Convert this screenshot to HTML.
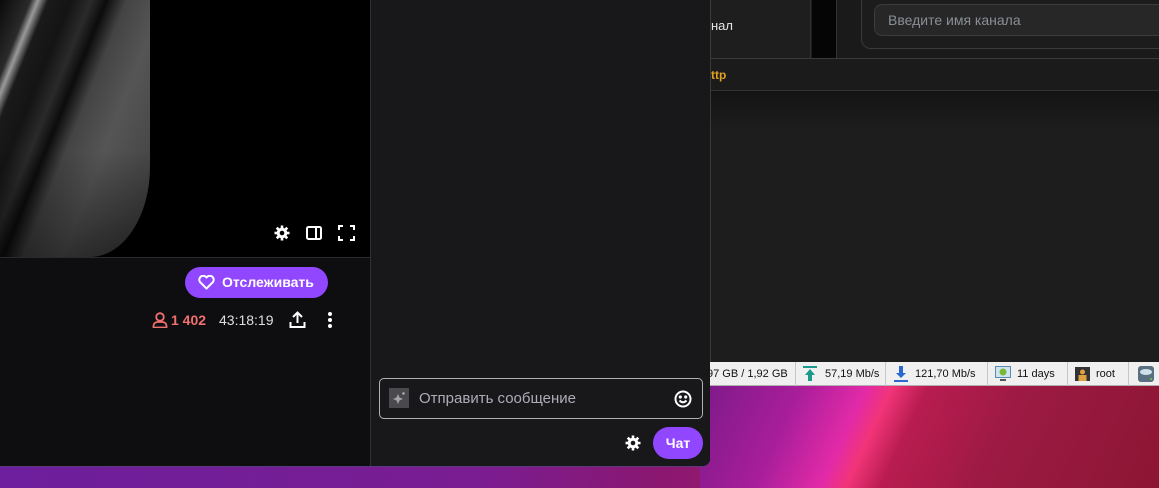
<!DOCTYPE html>
<html><head><meta charset="utf-8"><style>
*{margin:0;padding:0;box-sizing:border-box}
body{width:1159px;height:488px;overflow:hidden;position:relative;font-family:"Liberation Sans",Arial,sans-serif;
background:linear-gradient(100deg,#6a1f9e 0%,#7a1d92 45%,#8a1770 60%,#a01a6a 70%,#e02a90 76%,#f03070 79%,#9a1a45 82%,#8a1535 100%);}
.abs{position:absolute}
</style></head><body>
<div class="abs" style="left:700px;top:386px;width:459px;height:102px;background:linear-gradient(115deg,#7c1a8a 0%,#a81e9a 20%,#e22aa8 33%,#f23478 38%,#b81c50 45%,#9c1a44 65%,#8c1632 100%)"></div>
<div class="abs" style="left:710px;top:0;width:449px;height:362px;background:#1c1c1c"></div>
<div class="abs" style="left:700px;top:0;width:11px;height:362px;background:#151515"></div>
<div class="abs" style="left:710px;top:0;width:1px;height:362px;background:#3a3a3a"></div>
<div class="abs" style="left:711px;top:0;width:100px;height:58px;background:#1e1e1e;border-right:1px solid #333"></div>
<div class="abs" style="left:812px;top:0;width:24px;height:58px;background:#050505"></div>
<div class="abs" style="left:836px;top:0;width:1px;height:58px;background:#333"></div>
<div class="abs" style="left:837px;top:0;width:322px;height:58px;background:#1a1a1a"></div>
<div class="abs" style="left:861px;top:-10px;width:320px;height:59px;border:1px solid #3a3a3a;border-radius:10px;background:#1c1c1c"></div>
<div class="abs" style="left:874px;top:4px;width:300px;height:32px;border:1px solid #3c3c3c;border-radius:8px;background:#272727;color:#8a8f96;font-size:14px;line-height:30px;padding-left:13px">Введите имя канала</div>
<div class="abs" style="left:711px;top:18px;color:#e6e6e6;font-size:13px">нал</div>
<div class="abs" style="left:711px;top:58px;width:448px;height:1px;background:#3a3a3a"></div>
<div class="abs" style="left:711px;top:59px;width:448px;height:31px;background:#1b1b1b"></div>
<div class="abs" style="left:711px;top:68px;color:#e0a020;font-size:12px;font-weight:bold">ttp</div>
<div class="abs" style="left:711px;top:90px;width:448px;height:1px;background:#333"></div>
<div class="abs" style="left:711px;top:91px;width:448px;height:271px;background:linear-gradient(180deg,#141414,#1d1d1d 15%,#1d1d1d)"></div>
<div class="abs" style="left:710px;top:362px;width:449px;height:24px;background:#f0f0f0;border-bottom:1px solid #b0b0b0;font-size:11px;color:#111;line-height:24px">
 <span class="abs" style="left:-3px">97 GB / 1,92 GB</span>
 <div class="abs" style="left:85px;top:0;width:1px;height:24px;background:#c8c8c8"></div>
 <svg class="abs" style="left:93px;top:4px" width="14" height="16"><rect x="0" y="0" width="14" height="2" fill="#1a9a8a"/><path d="M7 3 L12 9 H9 V15 H5 V9 H2 Z" fill="#1a9a8a"/></svg>
 <span class="abs" style="left:115px">57,19 Mb/s</span>
 <div class="abs" style="left:175px;top:0;width:1px;height:24px;background:#c8c8c8"></div>
 <svg class="abs" style="left:184px;top:4px" width="14" height="16"><path d="M5 0 H9 V7 H12 L7 12 L2 7 H5 Z" fill="#2a6ad0"/><rect x="0" y="14" width="14" height="2" fill="#2a6ad0"/></svg>
 <span class="abs" style="left:205px">121,70 Mb/s</span>
 <div class="abs" style="left:277px;top:0;width:1px;height:24px;background:#c8c8c8"></div>
 <svg class="abs" style="left:285px;top:4px" width="16" height="16"><rect x="0" y="0" width="16" height="12" fill="#5a8ab0"/><rect x="1" y="1" width="14" height="10" fill="#cfe3f0"/><circle cx="8" cy="6" r="3.5" fill="#7ab83a"/><rect x="5" y="13" width="6" height="2" fill="#555"/></svg>
 <span class="abs" style="left:307px">11 days</span>
 <div class="abs" style="left:357px;top:0;width:1px;height:24px;background:#c8c8c8"></div>
 <svg class="abs" style="left:365px;top:5px" width="15" height="14"><rect width="15" height="14" fill="#333"/><circle cx="7.5" cy="5" r="2.5" fill="#e0a040"/><rect x="3.5" y="8" width="8" height="6" fill="#e0a040"/></svg>
 <span class="abs" style="left:386px">root</span>
 <div class="abs" style="left:418px;top:0;width:1px;height:24px;background:#c8c8c8"></div>
 <svg class="abs" style="left:428px;top:4px" width="16" height="16"><rect width="16" height="16" rx="3" fill="#5a7080"/><ellipse cx="8" cy="6" rx="6" ry="3" fill="#cfe0ea"/><circle cx="13" cy="13" r="1" fill="#7c4"/></svg>
</div>
<div class="abs" style="left:0;top:0;width:710px;height:467px;background:#0e0e10;border-bottom-right-radius:8px;overflow:hidden;border-bottom:1px solid #5a3a7a">
 <div class="abs" style="left:0;top:0;width:370px;height:257px;background:#000"></div>
 <div class="abs" style="left:0;top:0;width:150px;height:257px;border-bottom-right-radius:60px 90px;background:linear-gradient(112deg,#0a0a0a 0%,#2a2a2a 12%,#9a9a9a 15%,#1a1a1a 19%,#141414 28%,#2a2a2a 36%,#0c0c0c 42%,#444 50%,#555 65%,#4a4a4a 80%,#3a3a3a 100%)"></div>
 <div class="abs" style="left:0;top:150px;width:150px;height:107px;border-bottom-right-radius:60px 90px;background:linear-gradient(180deg,rgba(0,0,0,0),rgba(0,0,0,.45))"></div>
 <div class="abs" style="left:0;top:257px;width:370px;height:1px;background:#2a2a2e"></div>
 <svg class="abs" style="left:273px;top:224px" width="18" height="18" viewBox="0 0 18 18"><g stroke="#fff" stroke-width="2.6"><line x1="9" y1="1.5" x2="9" y2="16.5"/><line x1="1.5" y1="9" x2="16.5" y2="9"/><line x1="3.7" y1="3.7" x2="14.3" y2="14.3"/><line x1="14.3" y1="3.7" x2="3.7" y2="14.3"/></g><circle cx="9" cy="9" r="5.3" fill="#fff"/><circle cx="9" cy="9" r="2.3" fill="#000"/></svg>
 <svg class="abs" style="left:306px;top:226px" width="16" height="14"><rect x="1" y="1" width="14" height="12" rx="1.5" fill="none" stroke="#fff" stroke-width="2"/><rect x="9" y="1" width="2" height="12" fill="#fff"/></svg>
 <svg class="abs" style="left:338px;top:225px" width="17" height="16" fill="none" stroke="#fff" stroke-width="2"><path d="M1 5V1H5M12 1H16V5M16 11V15H12M5 15H1V11"/></svg>
 <div class="abs" style="left:185px;top:267px;width:143px;height:31px;border-radius:16px;background:#9147ff;color:#fff;font-weight:bold;font-size:14px;line-height:31px;padding-left:37px">Отслеживать</div>
 <svg class="abs" style="left:198px;top:275px" width="17" height="15" viewBox="0 0 17 15"><path d="M8.5 13.5 L2 7 A3.6 3.6 0 0 1 8.5 2.5 A3.6 3.6 0 0 1 15 7 Z" fill="none" stroke="#fff" stroke-width="2" stroke-linejoin="round"/></svg>
 <svg class="abs" style="left:152px;top:312px" width="16" height="16" fill="none" stroke="#f07070" stroke-width="1.8"><circle cx="8" cy="5" r="3.8"/><path d="M1.5 15.5 V14 A4 4 0 0 1 5.5 10 H10.5 A4 4 0 0 1 14.5 14 V15.5 Z"/></svg>
 <div class="abs" style="left:171px;top:312px;color:#f07070;font-weight:bold;font-size:14px">1 402</div>
 <div class="abs" style="left:219px;top:312px;color:#dedee3;font-size:14px">43:18:19</div>
 <svg class="abs" style="left:289px;top:311px" width="17" height="18" fill="none" stroke="#fff" stroke-width="2"><path d="M8.5 12V2M4 6L8.5 1.5 13 6M1.5 11V16H15.5V11"/></svg>
 <svg class="abs" style="left:327px;top:311px" width="6" height="18" fill="#fff"><circle cx="3" cy="3" r="2"/><circle cx="3" cy="9" r="2"/><circle cx="3" cy="15" r="2"/></svg>
 <div class="abs" style="left:370px;top:0;width:340px;height:467px;background:#18181b;border-left:1px solid #2f2f35"></div>
 <div class="abs" style="left:379px;top:378px;width:324px;height:41px;border:1px solid #b0b0b5;border-radius:5px"></div>
 <div class="abs" style="left:389px;top:388px;width:20px;height:20px;background:#4a4a4e"></div>
 <svg class="abs" style="left:389px;top:388px" width="20" height="20" fill="#bbb"><path d="M9 6 L10.5 9.5 L14 11 L10.5 12.5 L9 16 L7.5 12.5 L4 11 L7.5 9.5Z" opacity=".8"/><circle cx="14.5" cy="5.5" r="1.2"/></svg>
 <div class="abs" style="left:419px;top:390px;color:#adadb8;font-size:15px">Отправить сообщение</div>
 <svg class="abs" style="left:674px;top:390px" width="18" height="18" fill="none" stroke="#fff" stroke-width="2"><circle cx="9" cy="9" r="7.5"/><path d="M5.5 10.5 Q9 14 12.5 10.5"/><circle cx="6.3" cy="7" r=".6" fill="#fff"/><circle cx="11.7" cy="7" r=".6" fill="#fff"/></svg>
 <svg class="abs" style="left:624px;top:434px" width="18" height="18" viewBox="0 0 18 18"><g stroke="#fff" stroke-width="2.6"><line x1="9" y1="1.5" x2="9" y2="16.5"/><line x1="1.5" y1="9" x2="16.5" y2="9"/><line x1="3.7" y1="3.7" x2="14.3" y2="14.3"/><line x1="14.3" y1="3.7" x2="3.7" y2="14.3"/></g><circle cx="9" cy="9" r="5.3" fill="#fff"/><circle cx="9" cy="9" r="2.3" fill="#18181b"/></svg>
 <div class="abs" style="left:653px;top:427px;width:50px;height:32px;border-radius:16px;background:#9147ff;color:#fff;font-weight:bold;font-size:14px;line-height:32px;text-align:center">Чат</div>
</div>
</body></html>
